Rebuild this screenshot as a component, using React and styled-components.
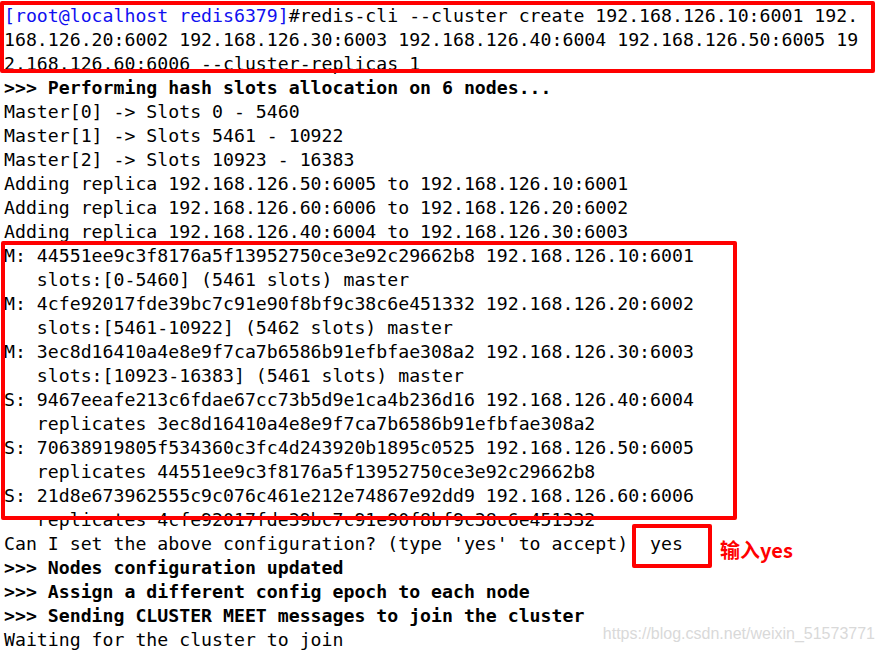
import React from "react";
import styled, { createGlobalStyle } from "styled-components";

const Global = createGlobalStyle`
  html, body { margin: 0; padding: 0; background: #ffffff; }
  body { width: 883px; height: 652px; overflow: hidden; }
`;

const Screen = styled.div`
  position: relative;
  width: 883px;
  height: 652px;
  background: #ffffff;
  overflow: hidden;
`;

const Terminal = styled.div`
  display: flex;
  flex-direction: column;
  padding: 4px 0 0 4px;
  font-family: "DejaVu Sans Mono", "Liberation Mono", monospace;
  font-size: 18.2px;
  line-height: 24px;
  color: #000000;
`;

const Line = styled.div`
  height: 24px;
  white-space: pre;
  font-weight: ${(p) => (p.$bold ? 700 : 400)};
`;

const Prompt = styled.span`
  color: #1010f0;
`;

const Box = styled.div`
  position: absolute;
  box-sizing: border-box;
  border: 4.5px solid #ff0000;
  border-radius: 2px;
  left: ${(p) => p.$x}px;
  top: ${(p) => p.$y}px;
  width: ${(p) => p.$w}px;
  height: ${(p) => p.$h}px;
`;

const Note = styled.div`
  position: absolute;
  left: 720px;
  top: 537px;
  font-family: "Noto Sans CJK SC", "Noto Sans", sans-serif;
  font-weight: 700;
  font-size: 20px;
  line-height: 26px;
  color: #ff0000;
`;

const Watermark = styled.div`
  position: absolute;
  right: 8px;
  top: 624px;
  font-family: "Liberation Sans", Arial, sans-serif;
  font-size: 16px;
  line-height: 20px;
  color: #d9d9d9;
`;

const lines = [
  { t: "168.126.20:6002 192.168.126.30:6003 192.168.126.40:6004 192.168.126.50:6005 19" },
  { t: "2.168.126.60:6006 --cluster-replicas 1" },
  { t: ">>> Performing hash slots allocation on 6 nodes...", b: true },
  { t: "Master[0] -> Slots 0 - 5460" },
  { t: "Master[1] -> Slots 5461 - 10922" },
  { t: "Master[2] -> Slots 10923 - 16383" },
  { t: "Adding replica 192.168.126.50:6005 to 192.168.126.10:6001" },
  { t: "Adding replica 192.168.126.60:6006 to 192.168.126.20:6002" },
  { t: "Adding replica 192.168.126.40:6004 to 192.168.126.30:6003" },
  { t: "M: 44551ee9c3f8176a5f13952750ce3e92c29662b8 192.168.126.10:6001" },
  { t: "   slots:[0-5460] (5461 slots) master" },
  { t: "M: 4cfe92017fde39bc7c91e90f8bf9c38c6e451332 192.168.126.20:6002" },
  { t: "   slots:[5461-10922] (5462 slots) master" },
  { t: "M: 3ec8d16410a4e8e9f7ca7b6586b91efbfae308a2 192.168.126.30:6003" },
  { t: "   slots:[10923-16383] (5461 slots) master" },
  { t: "S: 9467eeafe213c6fdae67cc73b5d9e1ca4b236d16 192.168.126.40:6004" },
  { t: "   replicates 3ec8d16410a4e8e9f7ca7b6586b91efbfae308a2" },
  { t: "S: 70638919805f534360c3fc4d243920b1895c0525 192.168.126.50:6005" },
  { t: "   replicates 44551ee9c3f8176a5f13952750ce3e92c29662b8" },
  { t: "S: 21d8e673962555c9c076c461e212e74867e92dd9 192.168.126.60:6006" },
  { t: "   replicates 4cfe92017fde39bc7c91e90f8bf9c38c6e451332" },
  { t: "Can I set the above configuration? (type 'yes' to accept): yes" },
  { t: ">>> Nodes configuration updated", b: true },
  { t: ">>> Assign a different config epoch to each node", b: true },
  { t: ">>> Sending CLUSTER MEET messages to join the cluster", b: true },
  { t: "Waiting for the cluster to join" },
];

export default function App() {
  return (
    <Screen>
      <Global />
      <Terminal>
        <Line>
          <Prompt>[root@localhost redis6379]</Prompt>
          #redis-cli --cluster create 192.168.126.10:6001 192.
        </Line>
        {lines.map((l, i) => (
          <Line key={i} $bold={l.b}>
            {l.t}
          </Line>
        ))}
      </Terminal>
      <Box $x={0} $y={1} $w={875} $h={72} />
      <Box $x={1} $y={241} $w={736} $h={279} />
      <Box $x={632} $y={524} $w={80} $h={44} />
      <Note>输入yes</Note>
      <Watermark>https://blog.csdn.net/weixin_51573771</Watermark>
    </Screen>
  );
}
